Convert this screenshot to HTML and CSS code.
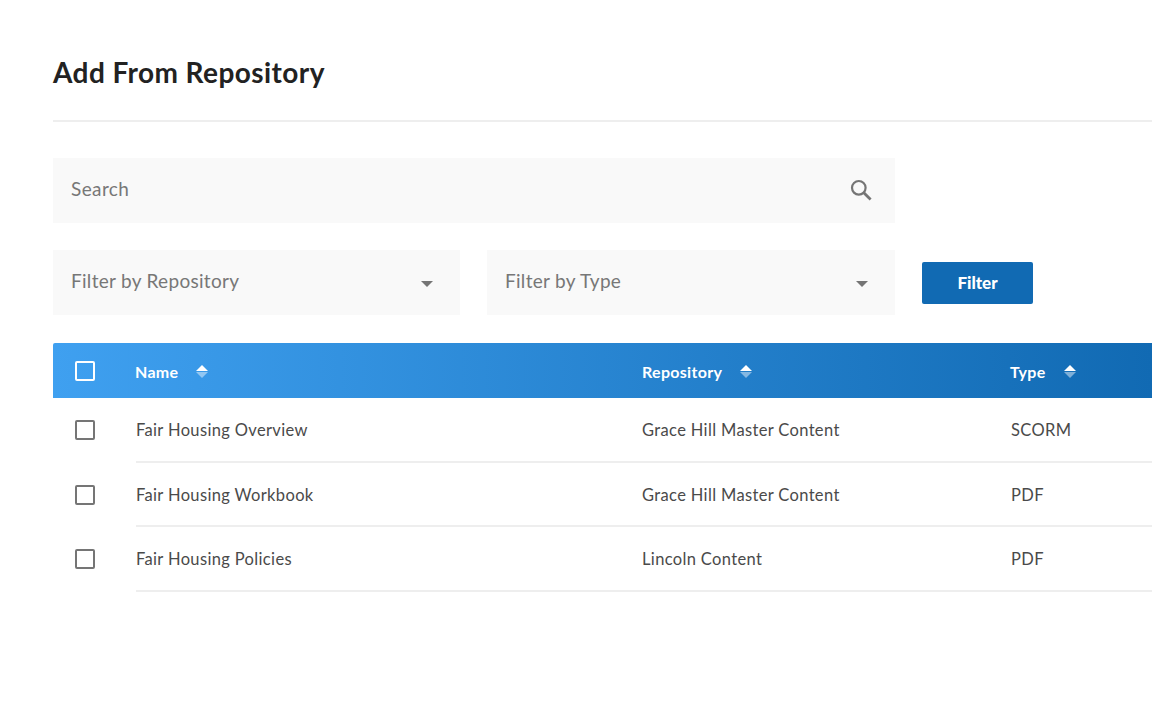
FILE: index.html

```html
<!DOCTYPE html>
<html lang="en">
<head>
    <meta charset="UTF-8">
    <meta name="viewport" content="width=device-width, initial-scale=1.0">
    <title>Add From Repository</title>
    <link rel="stylesheet" href="styles.css">
</head>
<body>

<div class="page">
    <h1 class="title">Add From Repository</h1>
    <hr class="rule">

    <div class="search-row">
        <div class="field">
            <span>Search</span>
            <svg class="search-icon" width="24" height="24" viewBox="0 0 24 24"><circle cx="9.8" cy="9.8" r="6.8" fill="none" stroke="#757575" stroke-width="2.2"/><path d="M14.8 14.8l6.8 6.8" fill="none" stroke="#757575" stroke-width="2.8"/></svg>
        </div>
    </div>

    <div class="filter-row">
        <div class="field select">
            <span>Filter by Repository</span>
            <i class="caret"></i>
        </div>
        <div class="field select">
            <span>Filter by Type</span>
            <i class="caret"></i>
        </div>
        <button class="filter-button">Filter</button>
    </div>

    <div class="table">
        <div class="table-head">
            <div class="cell-check"><i class="checkbox checkbox-light"></i></div>
            <div class="head-cell">Name <span class="sort"><i class="sort-up"></i><i class="sort-down"></i></span></div>
            <div class="head-cell">Repository <span class="sort"><i class="sort-up"></i><i class="sort-down"></i></span></div>
            <div class="head-cell">Type <span class="sort"><i class="sort-up"></i><i class="sort-down"></i></span></div>
        </div>

        <div class="table-row">
            <div class="cell-check"><i class="checkbox"></i></div>
            <div class="row-cells">
                <div class="cell">Fair Housing Overview</div>
                <div class="cell">Grace Hill Master Content</div>
                <div class="cell">SCORM</div>
            </div>
        </div>
        <div class="table-row">
            <div class="cell-check"><i class="checkbox"></i></div>
            <div class="row-cells">
                <div class="cell">Fair Housing Workbook</div>
                <div class="cell">Grace Hill Master Content</div>
                <div class="cell">PDF</div>
            </div>
        </div>
        <div class="table-row">
            <div class="cell-check"><i class="checkbox"></i></div>
            <div class="row-cells">
                <div class="cell">Fair Housing Policies</div>
                <div class="cell">Lincoln Content</div>
                <div class="cell">PDF</div>
            </div>
        </div>
    </div>
</div>

</body>
</html>
```

FILE: styles.css

```css
html, body {
    margin: 0;
    padding: 0;
    height: 100%;
    overflow: hidden;
    background-color: #ffffff;
}
body {
    font-family: 'Lato', 'Open Sans', sans-serif;
    color: #444444;
}
.page {
    padding: 55px 0 0 53px;
}
.title {
    margin: 0;
    font-size: 28px;
    line-height: 34px;
    font-weight: 700;
    letter-spacing: 0.42px;
    color: #222222;
}
.rule {
    margin: 31px 0 0;
    border: none;
    border-top: 2px solid #eeeeee;
}
.search-row {
    margin-top: 36px;
    width: 842px;
}
.field {
    display: flex;
    align-items: center;
    justify-content: space-between;
    box-sizing: border-box;
    height: 65px;
    padding: 0 22px 4px 18px;
    background-color: #f9f9f9;
    font-size: 19px;
    letter-spacing: 0.4px;
    color: #777777;
}
.search-icon {
    margin-top: 3px;
}
.filter-row {
    display: flex;
    align-items: center;
    margin-top: 27px;
}
.select {
    width: 407px;
    margin-right: 27px;
    letter-spacing: 0.3px;
}
.select + .select {
    width: 408px;
}
.caret {
    width: 0;
    height: 0;
    margin: 6px 5px 0 0;
    border-left: 6px solid transparent;
    border-right: 6px solid transparent;
    border-top: 6px solid #757575;
}
.filter-button {
    width: 111px;
    height: 42px;
    border: none;
    border-radius: 2px;
    background-color: #116ab3;
    color: #ffffff;
    font-family: inherit;
    font-size: 17px;
    font-weight: 900;
}
.table {
    margin-top: 28px;
}
.table-head {
    display: grid;
    grid-template-columns: 82px 507px 368px 1fr;
    align-items: center;
    height: 55px;
    border-radius: 2px 0 0 0;
    background: linear-gradient(90deg, #3fa0f0 0%, #116ab3 100%);
    color: #ffffff;
    font-size: 16px;
    font-weight: 700;
    letter-spacing: 0.3px;
}
.head-cell {
    display: flex;
    align-items: center;
    padding-top: 2px;
}
.sort {
    display: flex;
    flex-direction: column;
    gap: 1px;
    margin-left: 18px;
}
.sort-up, .sort-down {
    width: 0;
    height: 0;
    border-left: 6px solid transparent;
    border-right: 6px solid transparent;
}
.sort-up {
    border-bottom: 6px solid #ffffff;
}
.sort-down {
    border-top: 6px solid rgba(255, 255, 255, 0.45);
}
.cell-check {
    display: flex;
    align-items: center;
    padding-left: 22px;
}
.checkbox {
    display: block;
    box-sizing: border-box;
    width: 20px;
    height: 20px;
    border: 2.5px solid #757575;
    border-radius: 2px;
}
.checkbox-light {
    border-color: #ffffff;
}
.table-row {
    display: grid;
    grid-template-columns: 83px 1fr;
    height: 64.5px;
}
.row-cells {
    display: grid;
    grid-template-columns: 506px 369px 1fr;
    align-items: center;
    box-sizing: border-box;
    padding-top: 2px;
    border-bottom: 2px solid #eeeeee;
    font-size: 16.5px;
    letter-spacing: 0.35px;
    color: #4a4a4a;
}
```
